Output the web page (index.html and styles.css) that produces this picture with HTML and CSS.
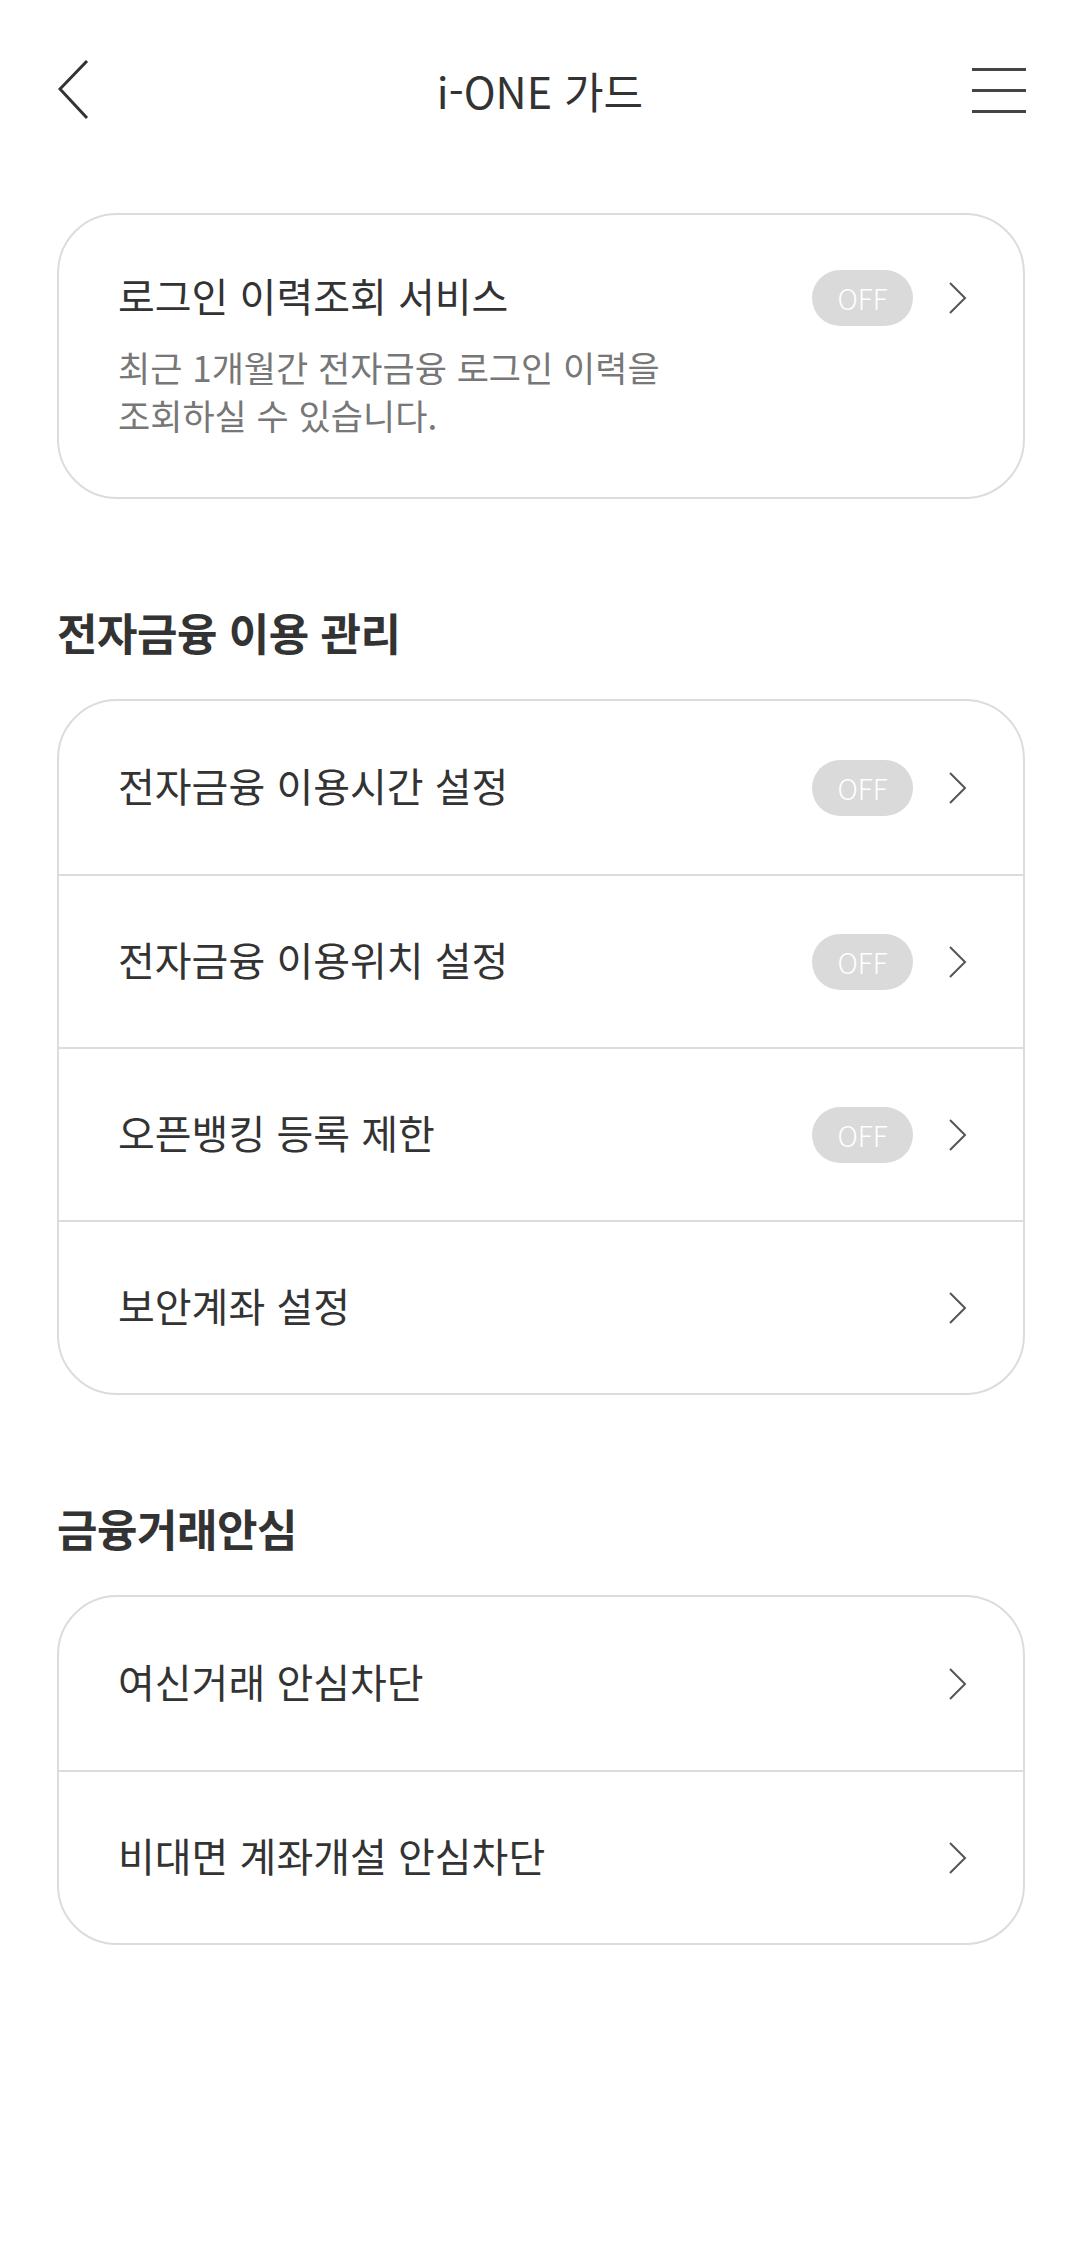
FILE: index.html
```html
<!DOCTYPE html>
<html lang="ko">
<head>
  <meta charset="UTF-8">
  <meta name="viewport" content="width=device-width, initial-scale=1.0">
  <title>i-ONE 가드</title>
  <link rel="stylesheet" href="styles.css">
</head>
<body>
  <div class="header">
    <a class="btn_back">
      <svg width="32" height="60" viewBox="0 0 32 60"><polyline points="29,1 2,29 29,58" fill="none" stroke="#333" stroke-width="3"/></svg>
    </a>
    <h1 class="title">i-ONE 가드</h1>
    <a class="btn_menu">
      <span></span><span></span><span></span>
    </a>
  </div>

  <div class="container">
    <div class="card login_card">
      <div class="row_head">
        <p class="item_tit">로그인 이력조회 서비스</p>
        <span class="toggle">OFF</span>
        <svg class="arrow" width="18" height="32" viewBox="0 0 18 32"><polyline points="1,1 16,16 1,31" fill="none" stroke="#555" stroke-width="2"/></svg>
      </div>
      <p class="desc">최근 1개월간 전자금융 로그인 이력을<br>조회하실 수 있습니다.</p>
    </div>

    <h2 class="sec_tit">전자금융 이용 관리</h2>
    <ul class="card list">
      <li>
        <p class="item_tit">전자금융 이용시간 설정</p>
        <span class="toggle">OFF</span>
        <svg class="arrow" width="18" height="32" viewBox="0 0 18 32"><polyline points="1,1 16,16 1,31" fill="none" stroke="#555" stroke-width="2"/></svg>
      </li>
      <li>
        <p class="item_tit">전자금융 이용위치 설정</p>
        <span class="toggle">OFF</span>
        <svg class="arrow" width="18" height="32" viewBox="0 0 18 32"><polyline points="1,1 16,16 1,31" fill="none" stroke="#555" stroke-width="2"/></svg>
      </li>
      <li>
        <p class="item_tit">오픈뱅킹 등록 제한</p>
        <span class="toggle">OFF</span>
        <svg class="arrow" width="18" height="32" viewBox="0 0 18 32"><polyline points="1,1 16,16 1,31" fill="none" stroke="#555" stroke-width="2"/></svg>
      </li>
      <li>
        <p class="item_tit">보안계좌 설정</p>
        <svg class="arrow" width="18" height="32" viewBox="0 0 18 32"><polyline points="1,1 16,16 1,31" fill="none" stroke="#555" stroke-width="2"/></svg>
      </li>
    </ul>

    <h2 class="sec_tit">금융거래안심</h2>
    <ul class="card list">
      <li>
        <p class="item_tit">여신거래 안심차단</p>
        <svg class="arrow" width="18" height="32" viewBox="0 0 18 32"><polyline points="1,1 16,16 1,31" fill="none" stroke="#555" stroke-width="2"/></svg>
      </li>
      <li>
        <p class="item_tit">비대면 계좌개설 안심차단</p>
        <svg class="arrow" width="18" height="32" viewBox="0 0 18 32"><polyline points="1,1 16,16 1,31" fill="none" stroke="#555" stroke-width="2"/></svg>
      </li>
    </ul>
  </div>
</body>
</html>
```

FILE: styles.css
```css
* {
  margin: 0;
  padding: 0;
  box-sizing: border-box;
}

html,
body {
  width: 100%;
  background-color: #fff;
  font-family: "Noto Sans CJK KR", "Noto Sans", sans-serif;
  color: #333;
}

ul {
  list-style: none;
}

.header {
  display: flex;
  align-items: center;
  height: 180px;
  padding: 0 54px 0 58px;
}

.header .btn_back {
  display: flex;
  width: 56px;
}

.header .title {
  flex: 1;
  text-align: center;
  font-size: 43px;
  font-weight: 400;
  color: #333;
  margin-right: 6px;
}

.header .btn_menu {
  display: flex;
  flex-direction: column;
  gap: 18px;
  width: 54px;
}

.header .btn_menu span {
  display: block;
  height: 3px;
  background-color: #444;
}

.container {
  padding: 33px 55px 0 57px;
}

.card {
  border: 2px solid #dcdcdc;
  border-radius: 60px;
  background-color: #fff;
}

.login_card {
  padding: 55px 56px 58px 59px;
}

.row_head {
  display: flex;
  align-items: center;
  height: 56px;
}

.item_tit {
  flex: 1;
  font-size: 40px;
  color: #333;
  padding-bottom: 6px;
}

.toggle {
  width: 101px;
  height: 56px;
  line-height: 56px;
  border-radius: 28px;
  text-align: center;
  font-size: 28px;
  font-weight: 300;
  color: #fff;
  background-color: #dadada;
  margin-right: 36px;
}

.arrow {
  display: block;
}

.desc {
  margin-top: 17px;
  font-size: 35px;
  line-height: 48px;
  color: #777;
}

.sec_tit {
  font-size: 44px;
  font-weight: 700;
  letter-spacing: -0.5px;
  line-height: 60px;
  color: #333;
  margin: 103px 0 37px 0;
}

.list li {
  display: flex;
  align-items: center;
  height: 173px;
  padding: 0 56px 0 59px;
  border-top: 2px solid #dcdcdc;
}

.list li:first-child {
  border-top: none;
}
```
